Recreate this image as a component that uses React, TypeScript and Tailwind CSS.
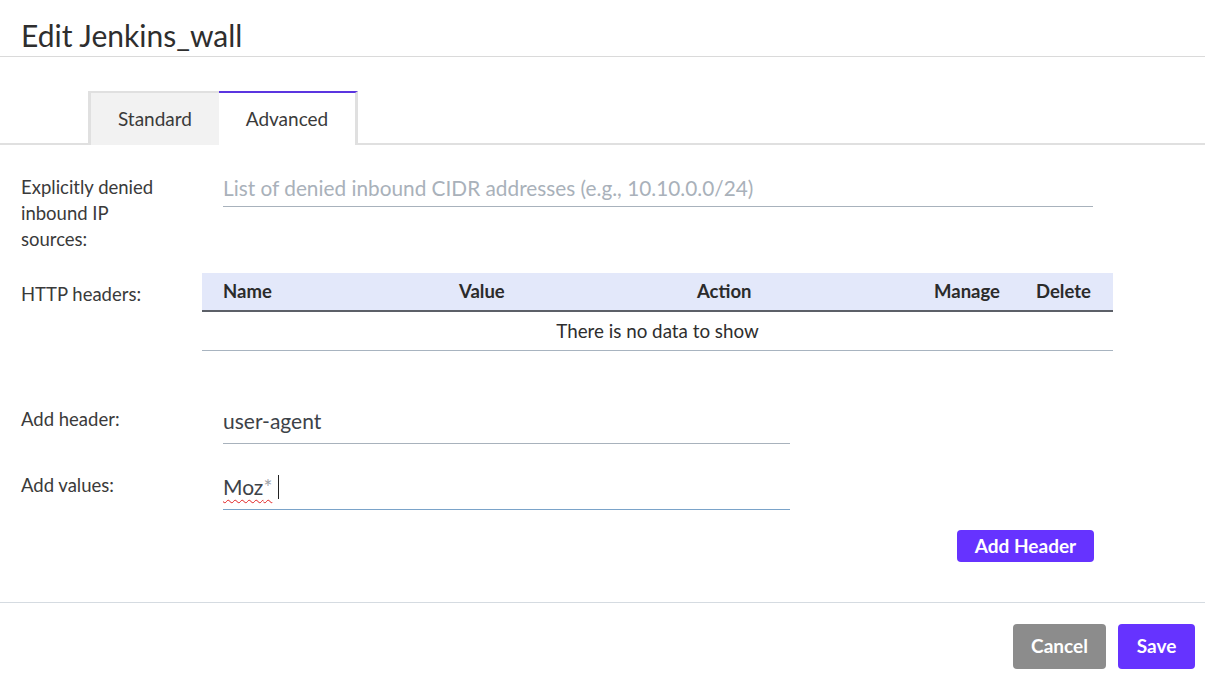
import React from "react";

const font = { fontFamily: "Lato, 'Open Sans', 'Liberation Sans', sans-serif" };

export default function App() {
  return (
    <div className="w-[1205px] h-[684px] bg-white text-[#333333] overflow-hidden" style={font}>
      {/* Title */}
      <div className="h-[57px] border-b border-[#dadada] pl-[21px] pt-[19px]">
        <h1 className="text-[30px] leading-[32px] text-[#2e2e2e]">Edit Jenkins_wall</h1>
      </div>

      {/* Tabs */}
      <div className="mt-[34px] flex items-end border-b-2 border-[#e0e0e0] pl-[88px] h-[54px]">
        <div className="-mb-[2px] h-[54px] w-[131px] border-l-[3px] border-t-2 border-[#e0e0e0] bg-[#f2f2f2] flex items-center justify-center text-[19px] text-[#3a3a3a]">
          Standard
        </div>
        <div className="-mb-[2px] h-[54px] w-[139px] border-t-2 border-t-[#5b35e0] border-r-[3px] border-r-[#e0e0e0] bg-white flex items-center justify-center text-[19px] text-[#3a3a3a]">
          Advanced
        </div>
      </div>

      {/* Row 1 */}
      <div className="mt-[29px] flex">
        <div className="w-[202px] pl-[21px] text-[18.5px] leading-[26px] text-[#3a3a3a]">
          Explicitly denied
          <br />
          inbound IP
          <br />
          sources:
        </div>
        <input
          className="ml-[21px] w-[870px] h-[33px] pb-[6px] border-b border-[#a8b2bc] outline-none text-[20.8px] text-[#3a3a3a] placeholder:text-[#a9b1ba]"
          placeholder="List of denied inbound CIDR addresses (e.g., 10.10.0.0/24)"
          style={font}
        />
      </div>

      {/* Row 2: table */}
      <div className="mt-[21px] flex">
        <div className="w-[202px] pl-[21px] pt-[8px] text-[18.5px] leading-[26px] text-[#3a3a3a]">HTTP headers:</div>
        <div className="w-[911px]">
          <div className="grid grid-cols-[236px_238px_237px_102px_98px] h-[39px] items-center bg-[#e3e8fa] border-b-2 border-[#5c6068] text-[18.5px] font-bold text-[#2b2b2b]">
            <div className="pl-[21px]">Name</div>
            <div className="pl-[21px]">Value</div>
            <div className="pl-[21px]">Action</div>
            <div className="pl-[21px]">Manage</div>
            <div className="pl-[21px]">Delete</div>
          </div>
          <div className="h-[39px] flex items-center justify-center border-b border-[#a8b4c0] text-[18.8px] text-[#2e2e2e]">
            There is no data to show
          </div>
        </div>
      </div>

      {/* Row 3 */}
      <div className="mt-[53px] flex">
        <div className="w-[202px] pl-[21px] pt-[2px] text-[18.5px] leading-[26px] text-[#3a3a3a]">Add header:</div>
        <input
          className="ml-[21px] w-[567px] h-[40px] pb-[6px] border-b border-[#a8b2bc] outline-none text-[21px] text-[#3d4248]"
          defaultValue="user-agent"
          readOnly
          style={font}
        />
      </div>

      {/* Row 4 */}
      <div className="mt-[26px] flex">
        <div className="w-[202px] pl-[21px] pt-[2px] text-[18.5px] leading-[26px] text-[#3a3a3a]">Add values:</div>
        <div className="ml-[21px] w-[567px] h-[40px] pb-[6px] border-b border-[#7aa3c9] flex items-center text-[21px] text-[#3d4248]">
          <span className="underline decoration-wavy decoration-[#e02020] decoration-1 underline-offset-[4px]">
            Moz<span className="text-[#a0a4aa]">*</span>
          </span>
          <span className="ml-[6px] inline-block w-[1px] h-[24px] bg-[#222]" />
        </div>
      </div>

      {/* Add header button */}
      <div className="mt-[20px] flex justify-end pr-[111px]">
        <button className="h-[32px] w-[137px] rounded-[4px] bg-[#6633ff] text-white text-[19px] font-bold">
          Add Header
        </button>
      </div>

      {/* Footer */}
      <div className="mt-[40px] border-t border-[#d5dbe1] pt-[21px] flex justify-end gap-[12px] pr-[10px]">
        <button className="h-[45px] w-[93px] rounded-[4px] bg-[#8c8c8c] text-white text-[19px] font-bold">Cancel</button>
        <button className="h-[45px] w-[77px] rounded-[4px] bg-[#6633ff] text-white text-[19px] font-bold">Save</button>
      </div>
    </div>
  );
}
